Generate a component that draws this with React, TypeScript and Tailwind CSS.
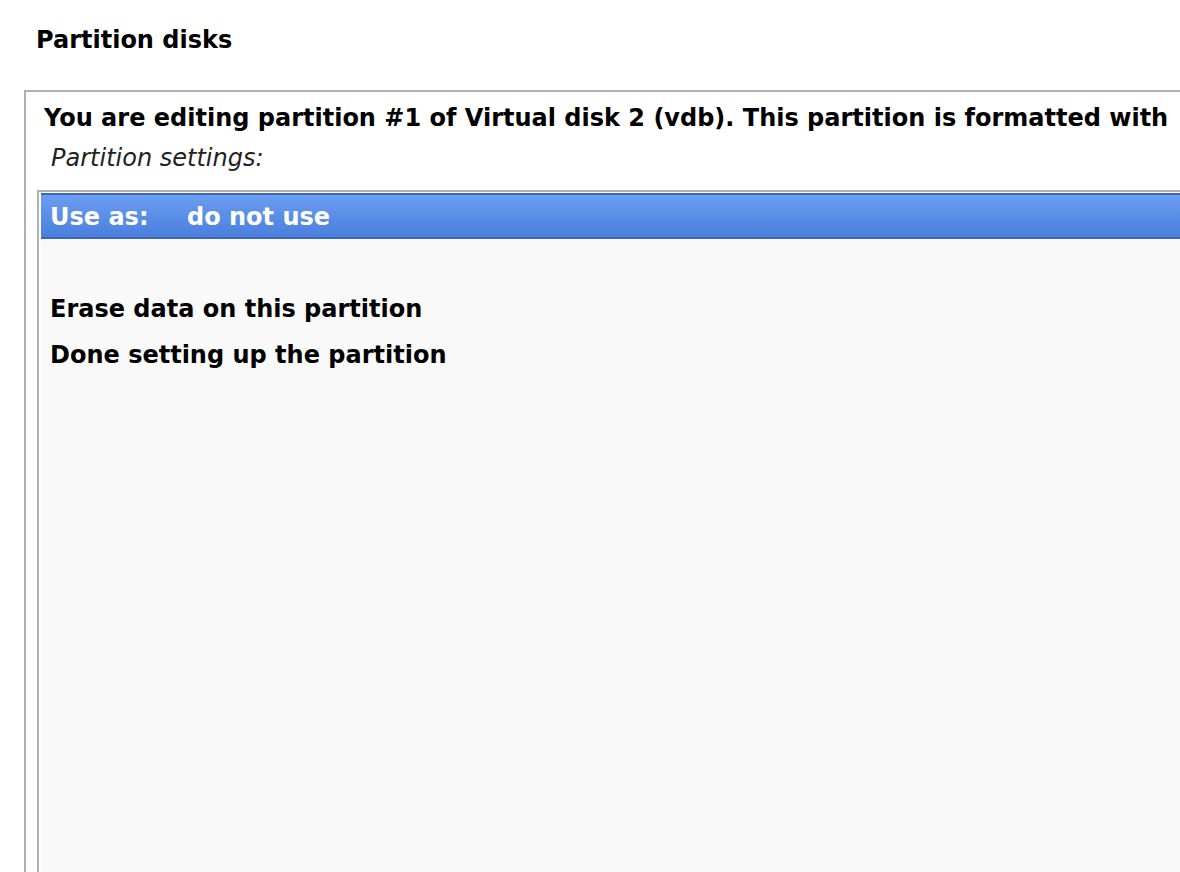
import React from 'react';

const rows = [
  { label: 'Use as:', value: 'do not use', selected: true },
  { label: '', value: '' },
  { label: 'Erase data on this partition' },
  { label: 'Done setting up the partition' },
];

const App: React.FC = () => {
  return (
    <div className="h-[872px] w-[1180px] overflow-hidden bg-white font-['DejaVu_Sans',sans-serif] text-black">
      <h1 className="pl-[36px] pt-[26px] h-[90px] text-[24px] font-bold leading-[28px]">Partition disks</h1>
      <div className="ml-[24px] w-[1300px] h-[900px] border-2 border-[#b0b0b0] px-[11px] pt-[12px]">
        <p className="ml-[7px] text-[24px] font-bold leading-[28px] whitespace-nowrap">
          You are editing partition #1 of Virtual disk 2 (vdb). This partition is formatted with
        </p>
        <p className="ml-[14px] mt-[12px] text-[24px] italic leading-[28px] text-[#222]">Partition settings:</p>
        <div className="mt-[18px] h-[800px] border-2 border-[#b0b0b0] bg-white py-px pl-[2px]">
          <div className="h-full bg-[#f9f9f9]">
            {rows.map((r, i) =>
              r.selected ? (
                <div
                  key={i}
                  className="flex h-[46px] items-center border-y-2 border-[#3e64b6] bg-gradient-to-b from-[#6b9df1] to-[#4a7fdc] pl-[9px] pt-[2px] text-[24px] font-bold text-white"
                >
                  <span className="w-[137px]">{r.label}</span>
                  <span>{r.value}</span>
                </div>
              ) : (
                <div key={i} className="flex h-[46px] items-center pl-[9px] pt-[2px] text-[24px] font-bold">
                  {r.label}
                </div>
              )
            )}
          </div>
        </div>
      </div>
    </div>
  );
};

export default App;
